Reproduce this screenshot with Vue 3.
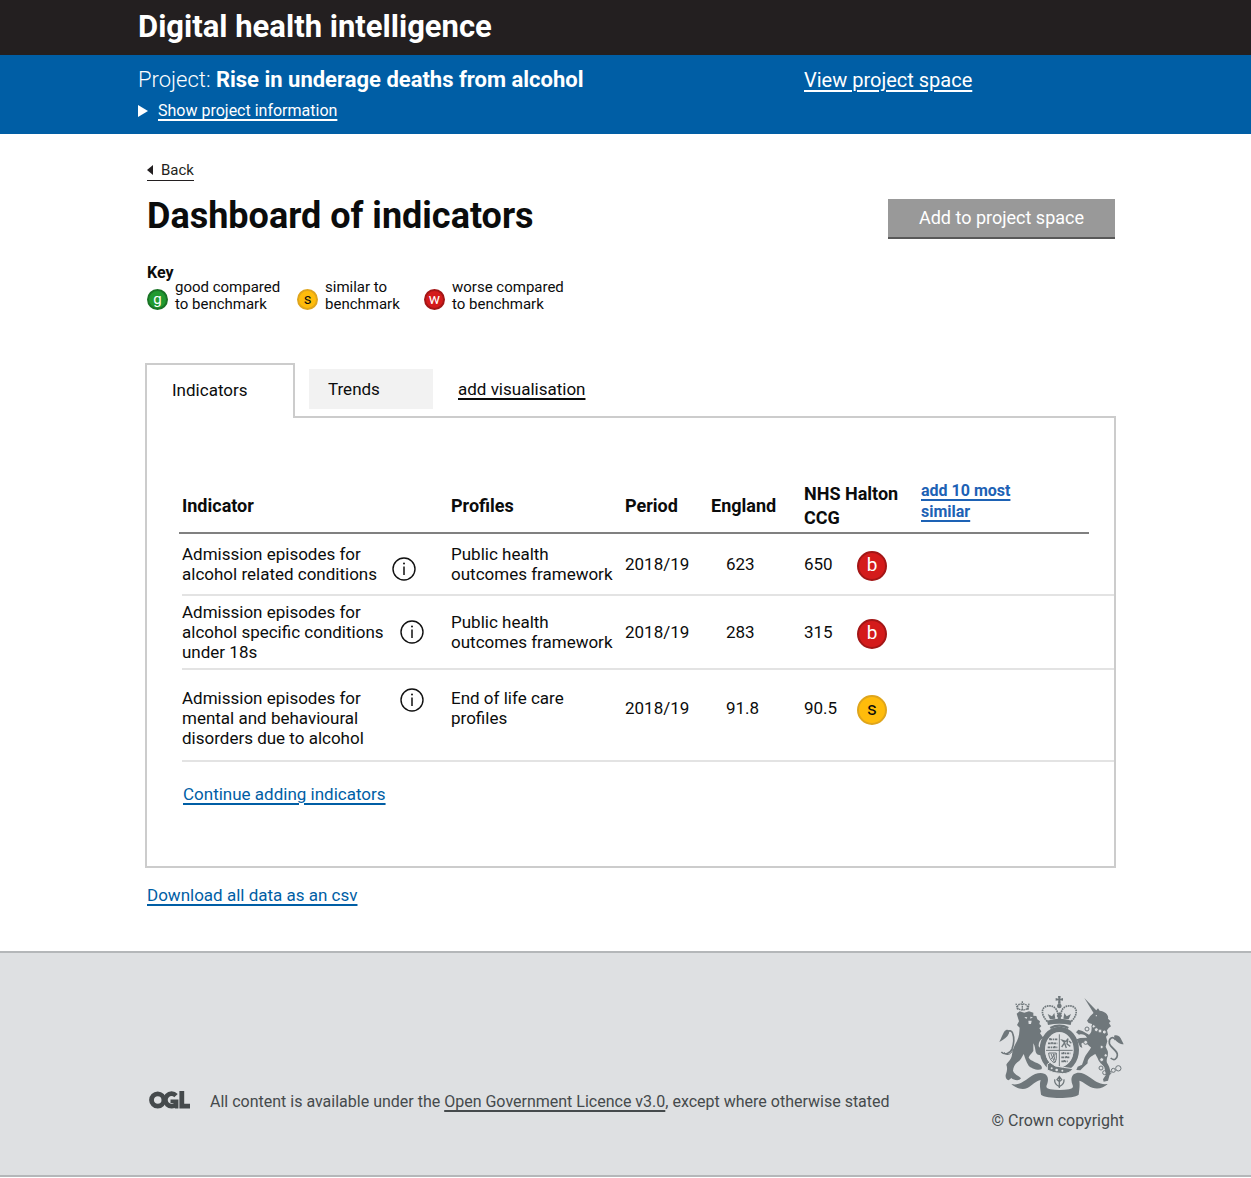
<script setup>
const keyItems = [
  { letter: 'g', tone: 'good', lines: 'good compared\nto benchmark' },
  { letter: 's', tone: 'similar', lines: 'similar to\nbenchmark' },
  { letter: 'w', tone: 'worse', lines: 'worse compared\nto benchmark' },
]

const rows = [
  {
    size: 'short',
    indicator: 'Admission episodes for\nalcohol related conditions',
    profile: 'Public health\noutcomes framework',
    period: '2018/19',
    england: '623',
    local: '650',
    letter: 'b',
    tone: 'worse',
  },
  {
    size: 'medium',
    indicator: 'Admission episodes for\nalcohol specific conditions\nunder 18s',
    profile: 'Public health\noutcomes framework',
    period: '2018/19',
    england: '283',
    local: '315',
    letter: 'b',
    tone: 'worse',
  },
  {
    size: 'tall',
    indicator: 'Admission episodes for\nmental and behavioural\ndisorders due to alcohol',
    profile: 'End of life care\nprofiles',
    period: '2018/19',
    england: '91.8',
    local: '90.5',
    letter: 's',
    tone: 'similar',
  },
]
</script>

<template>
  <div class="page">
    <header>
      <div class="masthead">
        <div class="container bar-inner">
          <span class="brand">Digital health intelligence</span>
        </div>
      </div>
      <div class="project">
        <div class="container bar-inner project-grid">
          <div>
            <p class="project-title">Project: <strong>Rise in underage deaths from alcohol</strong></p>
            <a class="disclosure" href="#info">
              <svg width="10" height="12" viewBox="0 0 10 12" aria-hidden="true"><path d="M0 0 10 6 0 12z" fill="#fff" /></svg>
              <span>Show project information</span>
            </a>
          </div>
          <a class="project-link" href="#space">View project space</a>
        </div>
      </div>
    </header>

    <main class="container main">
      <a class="back" href="#back">
        <svg width="6" height="10" viewBox="0 0 6 10" aria-hidden="true"><path d="M6 0v10L0 5z" fill="#231f20" /></svg>
        Back
      </a>
      <div class="title-row">
        <h1>Dashboard of indicators</h1>
        <button type="button" class="add-button">Add to project space</button>
      </div>

      <section class="key">
        <h2>Key</h2>
        <ul>
          <li v-for="item in keyItems" :key="item.letter">
            <span class="badge small" :class="item.tone">{{ item.letter }}</span>
            <span class="lines">{{ item.lines }}</span>
          </li>
        </ul>
      </section>

      <nav class="tabs">
        <button type="button" class="tab active">Indicators</button>
        <button type="button" class="tab idle">Trends</button>
        <a class="add-visual" href="#visualisation">add visualisation</a>
      </nav>

      <section class="panel">
        <table>
          <colgroup>
            <col class="c-indicator" /><col class="c-profile" /><col class="c-period" />
            <col class="c-england" /><col class="c-local" /><col />
          </colgroup>
          <thead>
            <tr>
              <th>Indicator</th>
              <th>Profiles</th>
              <th>Period</th>
              <th>England</th>
              <th>NHS Halton<br />CCG</th>
              <th class="more"><a href="#similar">add 10 most<br />similar</a></th>
            </tr>
          </thead>
          <tbody>
            <tr v-for="row in rows" :key="row.indicator" :class="row.size">
              <td class="indicator">
                <div class="indicator-inner">
                  <span class="lines label">{{ row.indicator }}</span>
                  <svg class="info" width="24" height="24" viewBox="0 0 24 24" role="img" aria-label="More information">
                    <circle cx="12" cy="12" r="11" fill="none" stroke="#111" stroke-width="1.4" />
                    <path d="M12 9.5V18" stroke="#111" stroke-width="1.5" />
                    <circle cx="12" cy="6.6" r="1" fill="#111" />
                  </svg>
                </div>
              </td>
              <td class="lines">{{ row.profile }}</td>
              <td>{{ row.period }}</td>
              <td class="england">{{ row.england }}</td>
              <td>
                <div class="local">
                  <span>{{ row.local }}</span>
                  <span class="badge large" :class="row.tone">{{ row.letter }}</span>
                </div>
              </td>
              <td></td>
            </tr>
          </tbody>
        </table>
        <a class="blue-link" href="#continue">Continue adding indicators</a>
      </section>

      <a class="blue-link download" href="#csv">Download all data as an csv</a>
    </main>

    <footer>
      <div class="container footer-inner">
        <div class="licence">
          <svg class="ogl" width="42" height="18" viewBox="0 0 42 18" role="img" aria-label="OGL">
            <g fill="none" stroke="#454a4c" stroke-width="4.8">
              <circle cx="8.7" cy="9" r="6.2" />
              <path d="M27 4.6A6.2 6.2 0 1 0 27.2 13" />
              <path d="M21.5 10.2H27.6V17.4" stroke-width="3.6" />
              <path d="M32.8 0V15.2H41" />
            </g>
          </svg>
          <p>All content is available under the <a href="#ogl">Open Government Licence v3.0</a>, except where otherwise stated</p>
        </div>
        <div class="crown">
          <svg width="125" height="104" viewBox="60 45 375 312" role="img" aria-label="Royal coat of arms">
            <g fill="#6f777b">
              <!-- ribbon -->
              <path d="M97 312C120 317 134 305 152 292C170 278 194 274 204 288C209 296 207 306 203 316C200 323 205 326 214 328C232 331 252 331 270 328C279 326 284 323 281 316C276 304 275 291 284 283C298 273 316 280 332 292C349 304 362 315 386 312C375 323 357 329 340 323C324 317 314 305 301 302C303 314 301 329 299 344C283 357 201 357 186 344C185 329 180 316 185 300C170 303 160 316 145 324C128 331 108 323 97 312z" />
              <!-- lion -->
              <path d="M113 101 122 94 136 98 150 94 163 98 163 107 172 108 175 118 183 124 181 132 187 138 181 145 187 154 183 160 193 173C183 178 178 188 179 199C185 208 196 213 198 222C188 229 172 226 170 215C168 205 168 198 163 190L163 213C157 222 151 226 149 233C153 240 166 245 176 250C186 254 192 262 187 268C174 272 155 264 149 257C141 245 137 229 134 222C128 233 125 241 115 247C107 254 103 262 102 272C106 284 119 287 126 295C121 304 104 301 97 294L89 301C82 299 79 293 80 285C84 275 86 264 82 254C87 244 97 239 99 224C100 207 108 195 114 183C121 169 121 155 122 143L114 135 120 124z" />
              <path d="M61 186C65 180 69 165 77 153C86 145 92 151 90 160C85 172 76 178 61 186z" />
              <!-- unicorn -->
              <path d="M316 54 356 95 346 103z" />
              <path d="M350 93 357 85 362 92C377 94 390 104 387 116L395 124 390 129 396 139 389 144 384 151 387 164 381 170 385 184 380 200 386 213C390 224 380 237 384 248C392 261 397 275 391 288L387 302 374 305 372 298 381 284 376 262C369 252 360 248 356 235L349 222C336 229 324 237 326 250L313 262 304 271 292 270 296 260 309 254 315 238C320 222 333 212 336 202C322 193 320 182 307 191L310 204 303 200 293 178 303 174 324 173C318 163 309 161 300 164L291 157 298 149 310 153 330 164C340 158 337 146 339 132L329 129 324 122 334 108z" />
              <path d="M405 167C416 162 425 170 428 181L434 193C421 192 407 184 405 167z" />
              <!-- crown base -->
              <path d="M204 122Q241 111 278 122L275 135Q241 127 207 135z" />
              <path d="M237 48h8l-1 8 8-2v8l-8-1 1 10h-8l1-10-8 1v-8l8 2z" />
              <circle cx="241" cy="78" r="7" />
              <path d="M213 118 206 102 219 109 226 99 229 116zM253 116 256 99 263 109 276 102 269 118zM241 96 249 108 241 118 233 108z" />
            </g>
            <g fill="none" stroke="#6f777b">
              <path d="M67 216C77 226 93 221 99 207C105 191 105 171 101 160C98 151 91 151 84 156" stroke-width="5" />
              <path d="M75 217C87 232 99 219 102 207" stroke-width="3" />
              <path d="M410 180C402 167 389 174 391 190C394 205 417 210 415 226C414 238 405 243 395 234" stroke-width="5" />
              <path d="M205 124C190 110 185 90 197 81C214 73 229 80 233 91C238 101 238 113 240 121M277 124C292 110 297 90 285 81C268 73 253 80 249 91C244 101 244 113 242 121" stroke-width="5" stroke-dasharray="5 2" />
              <path d="M116 89 111 71M147 89 150 71M113 84Q131 96 149 84M118 88Q110 72 130 72Q150 72 144 88M130 90V64" stroke-width="4" stroke-dasharray="5 2" />
              <ellipse cx="241" cy="209" rx="51" ry="61" stroke-width="16" />
              <path d="M214 144Q241 130 268 144" stroke-width="7" />
              <g stroke-width="3">
                <circle cx="366" cy="264" r="6" /><circle cx="377" cy="278" r="6" /><circle cx="391" cy="278" r="5" />
                <circle cx="403" cy="271" r="6" /><circle cx="418" cy="265" r="8" />
              </g>
              <path d="M241 290V324M241 290 234 299 241 305 248 299zM227 298Q226 313 240 319M255 298Q256 313 242 319" stroke-width="4" />
            </g>
            <!-- shield -->
            <ellipse cx="241" cy="211" rx="42" ry="51" fill="#dee0e2" />
            <g fill="none" stroke="#6f777b">
              <path d="M241 163V258M201 211H281" stroke-width="3" />
              <path d="M211 178h24M207 190h28M206 202h29M247 220h27M247 232h25M247 244h19" stroke-width="5" stroke-dasharray="8 2 4 2" />
              <path d="M213 174v6M219 186v6M227 198v6M254 216v6M262 228v6M256 240v6" stroke-width="4" />
              <path d="M209 219H232V236Q230 251 224 248 210 238 209 219zM216 221 226 246M223 221 228 240M230 221 215 238" stroke-width="3" />
              <path d="M248 201 257 188 250 181 261 184 267 176 264 192 274 199M257 190 262 204M270 183 277 190" stroke-width="4" />
            </g>
            <!-- garter buckle -->
            <path d="M205 253 213 247 229 258 253 262 282 266Q273 281 250 281 222 280 205 270z" fill="#6f777b" stroke="#dee0e2" stroke-width="3" />
            <g fill="#dee0e2">
              <circle cx="218" cy="265" r="3" /><circle cx="233" cy="270" r="4" /><circle cx="250" cy="272" r="3" />
              <path d="M136 111 145 112 142 117zM154 110 162 112 154 116zM148 122 158 122 156 132 149 132z" />
              <circle cx="352" cy="107" r="2" />
            </g>
            <g fill="#dee0e2" stroke="#6f777b" stroke-width="3">
              <circle cx="344" cy="139" r="5" /><circle cx="352" cy="149" r="6" /><circle cx="363" cy="153" r="6" /><circle cx="376" cy="156" r="6" />
              <circle cx="324" cy="147" r="6" /><circle cx="320" cy="187" r="6" /><circle cx="368" cy="201" r="5" /><circle cx="380" cy="226" r="5" /><circle cx="368" cy="239" r="6" />
            </g>
          </svg>
          <span>© Crown copyright</span>
        </div>
      </div>
    </footer>
  </div>
</template>

<style>
body {
  margin: 0;
  background: #fff;
}
</style>

<style scoped>
.page {
  font-family: Roboto, "Liberation Sans", sans-serif;
  font-size: 17px;
  line-height: 20px;
  color: #0b0c0c;
}
.container {
  max-width: 981px;
  margin: 0 auto;
  box-sizing: border-box;
}
a {
  color: inherit;
  text-decoration-thickness: 2px;
  text-underline-offset: 3px;
}
h1, h2, p, ul {
  margin: 0;
  padding: 0;
}
button {
  font: inherit;
  border: 0;
  border-radius: 0;
}
.lines {
  white-space: pre-line;
}

.masthead {
  background: #231f20;
  color: #fff;
}
.bar-inner {
  padding-left: 3px;
}
.brand {
  display: block;
  padding: 9px 0 10px;
  font-size: 31px;
  line-height: 36px;
  font-weight: 700;
}
.project {
  background: #005ea5;
  color: #fff;
}
.project-grid {
  display: grid;
  grid-template-columns: 666px 1fr;
  align-items: start;
  padding-top: 12px;
  padding-bottom: 13px;
}
.project-title {
  font-size: 22px;
  line-height: 26px;
  font-weight: 300;
}
.project-title strong {
  font-weight: 700;
}
.project-link {
  font-size: 20px;
  line-height: 26px;
}
.disclosure {
  display: flex;
  align-items: center;
  gap: 10px;
  margin-top: 8px;
  font-size: 16px;
  text-decoration: none;
}
.disclosure span {
  text-decoration: underline;
  text-decoration-thickness: 2px;
  text-underline-offset: 3px;
}

.main {
  padding: 25px 0 46px 10px;
}
.back {
  display: inline-flex;
  align-items: center;
  gap: 8px;
  margin-left: 2px;
  border-bottom: 1px solid #231f20;
  font-size: 15px;
  color: #231f20;
  text-decoration: none;
}
.title-row {
  display: flex;
  justify-content: space-between;
  align-items: flex-start;
  padding: 0 1px 0 2px;
  margin-top: 13px;
}
h1 {
  font-size: 36px;
  line-height: 44px;
  font-weight: 700;
}
.add-button {
  width: 227px;
  height: 40px;
  margin-top: 5px;
  padding: 0;
  border-bottom: 2px solid #585858;
  background: #999;
  color: #fff;
  font-size: 18px;
}
.key {
  padding-left: 2px;
  margin-top: 25px;
  font-size: 15px;
  line-height: 17px;
}
.key h2 {
  font-size: 16px;
  line-height: 17px;
}
.key ul {
  display: grid;
  grid-template-columns: 150px 127px 1fr;
  margin-top: -2px;
  list-style: none;
}
.key li {
  display: flex;
  align-items: flex-end;
  gap: 7px;
}
.badge {
  display: inline-flex;
  align-items: center;
  justify-content: center;
  box-sizing: border-box;
  border-radius: 50%;
  flex: none;
}
.badge.small {
  width: 21px;
  height: 21px;
  padding-bottom: 1px;
  border: 2px solid;
  font-size: 15px;
  line-height: 15px;
  margin-bottom: 3px;
}
.badge.large {
  width: 30px;
  height: 30px;
  border: 2px solid;
  padding-bottom: 2px;
  font-size: 19px;
  margin-top: 4px;
}
.badge.good {
  background: #219a30;
  border-color: #1a7426;
  color: #fff;
}
.badge.similar {
  background: #ffbc0b;
  border-color: #dfa51c;
  color: #0b0c0c;
}
.badge.worse {
  background: #d41b1b;
  border-color: #a31616;
  color: #fff;
}

.tabs {
  display: flex;
  align-items: flex-start;
  margin-top: 50px;
}
.tab {
  box-sizing: border-box;
  text-align: left;
  color: inherit;
}
.tab.active {
  position: relative;
  width: 150px;
  height: 55px;
  margin-bottom: -2px;
  padding: 0 25px 4px;
  border: 2px solid #ccc;
  border-bottom: 0;
  background: #fff;
}
.tab.idle {
  width: 124px;
  height: 40px;
  margin: 6px 25px 0 14px;
  padding: 0 19px;
  background: #f2f2f2;
}
.add-visual {
  margin-top: 16px;
}
.panel {
  border: 2px solid #ccc;
  padding: 60px 0 62px 35px;
}
table {
  width: 100%;
  table-layout: fixed;
  border-collapse: separate;
  border-spacing: 0;
}
.c-indicator { width: 269px; }
.c-profile { width: 174px; }
.c-period { width: 86px; }
.c-england { width: 93px; }
.c-local { width: 117px; }
thead {
  position: relative;
}
thead::after {
  content: "";
  position: absolute;
  left: -3px;
  right: 25px;
  bottom: 0;
  height: 2px;
  background: #808080;
}
th {
  height: 56px;
  padding: 0;
  text-align: left;
  font-size: 18px;
  line-height: 24px;
}
th.more {
  padding-bottom: 10px;
  height: 46px;
  font-size: 16px;
  line-height: 21px;
  color: #1d62b5;
}
td {
  padding: 0;
  border-bottom: 2px solid #e3e3e3;
}
.short td { height: 60px; }
.medium td { height: 72px; }
.tall td {
  height: 76px;
  padding-bottom: 14px;
}
.tall .indicator {
  height: 84px;
  padding: 6px 0 0;
}
.indicator-inner {
  display: flex;
  align-items: center;
  gap: 10px;
}
.label {
  min-width: 208px;
}
.short .label {
  min-width: 200px;
}
.short .info {
  margin-top: 10px;
}
.tall .info {
  align-self: flex-start;
}
td.england {
  padding-left: 15px;
}
.local {
  display: grid;
  grid-template-columns: 53px 30px;
  align-items: center;
}
.blue-link {
  color: #005ea5;
}
.panel .blue-link {
  display: inline-block;
  margin: 22px 0 0 1px;
}
.download {
  display: inline-block;
  margin: 17px 0 0 2px;
}

footer {
  border-top: 2px solid #b4b7b9;
  border-bottom: 2px solid #b4b7b9;
  background: #dee0e2;
  color: #454a4c;
  font-size: 16px;
}
.footer-inner {
  display: flex;
  justify-content: space-between;
  align-items: flex-end;
  padding: 42px 0 44px 14px;
}
.licence {
  display: flex;
  align-items: center;
  gap: 19px;
  margin-bottom: 18px;
}
.ogl {
  margin-bottom: 4px;
}
.crown {
  display: flex;
  flex-direction: column;
  align-items: flex-end;
  gap: 12px;
  margin-right: -8px;
}
</style>
